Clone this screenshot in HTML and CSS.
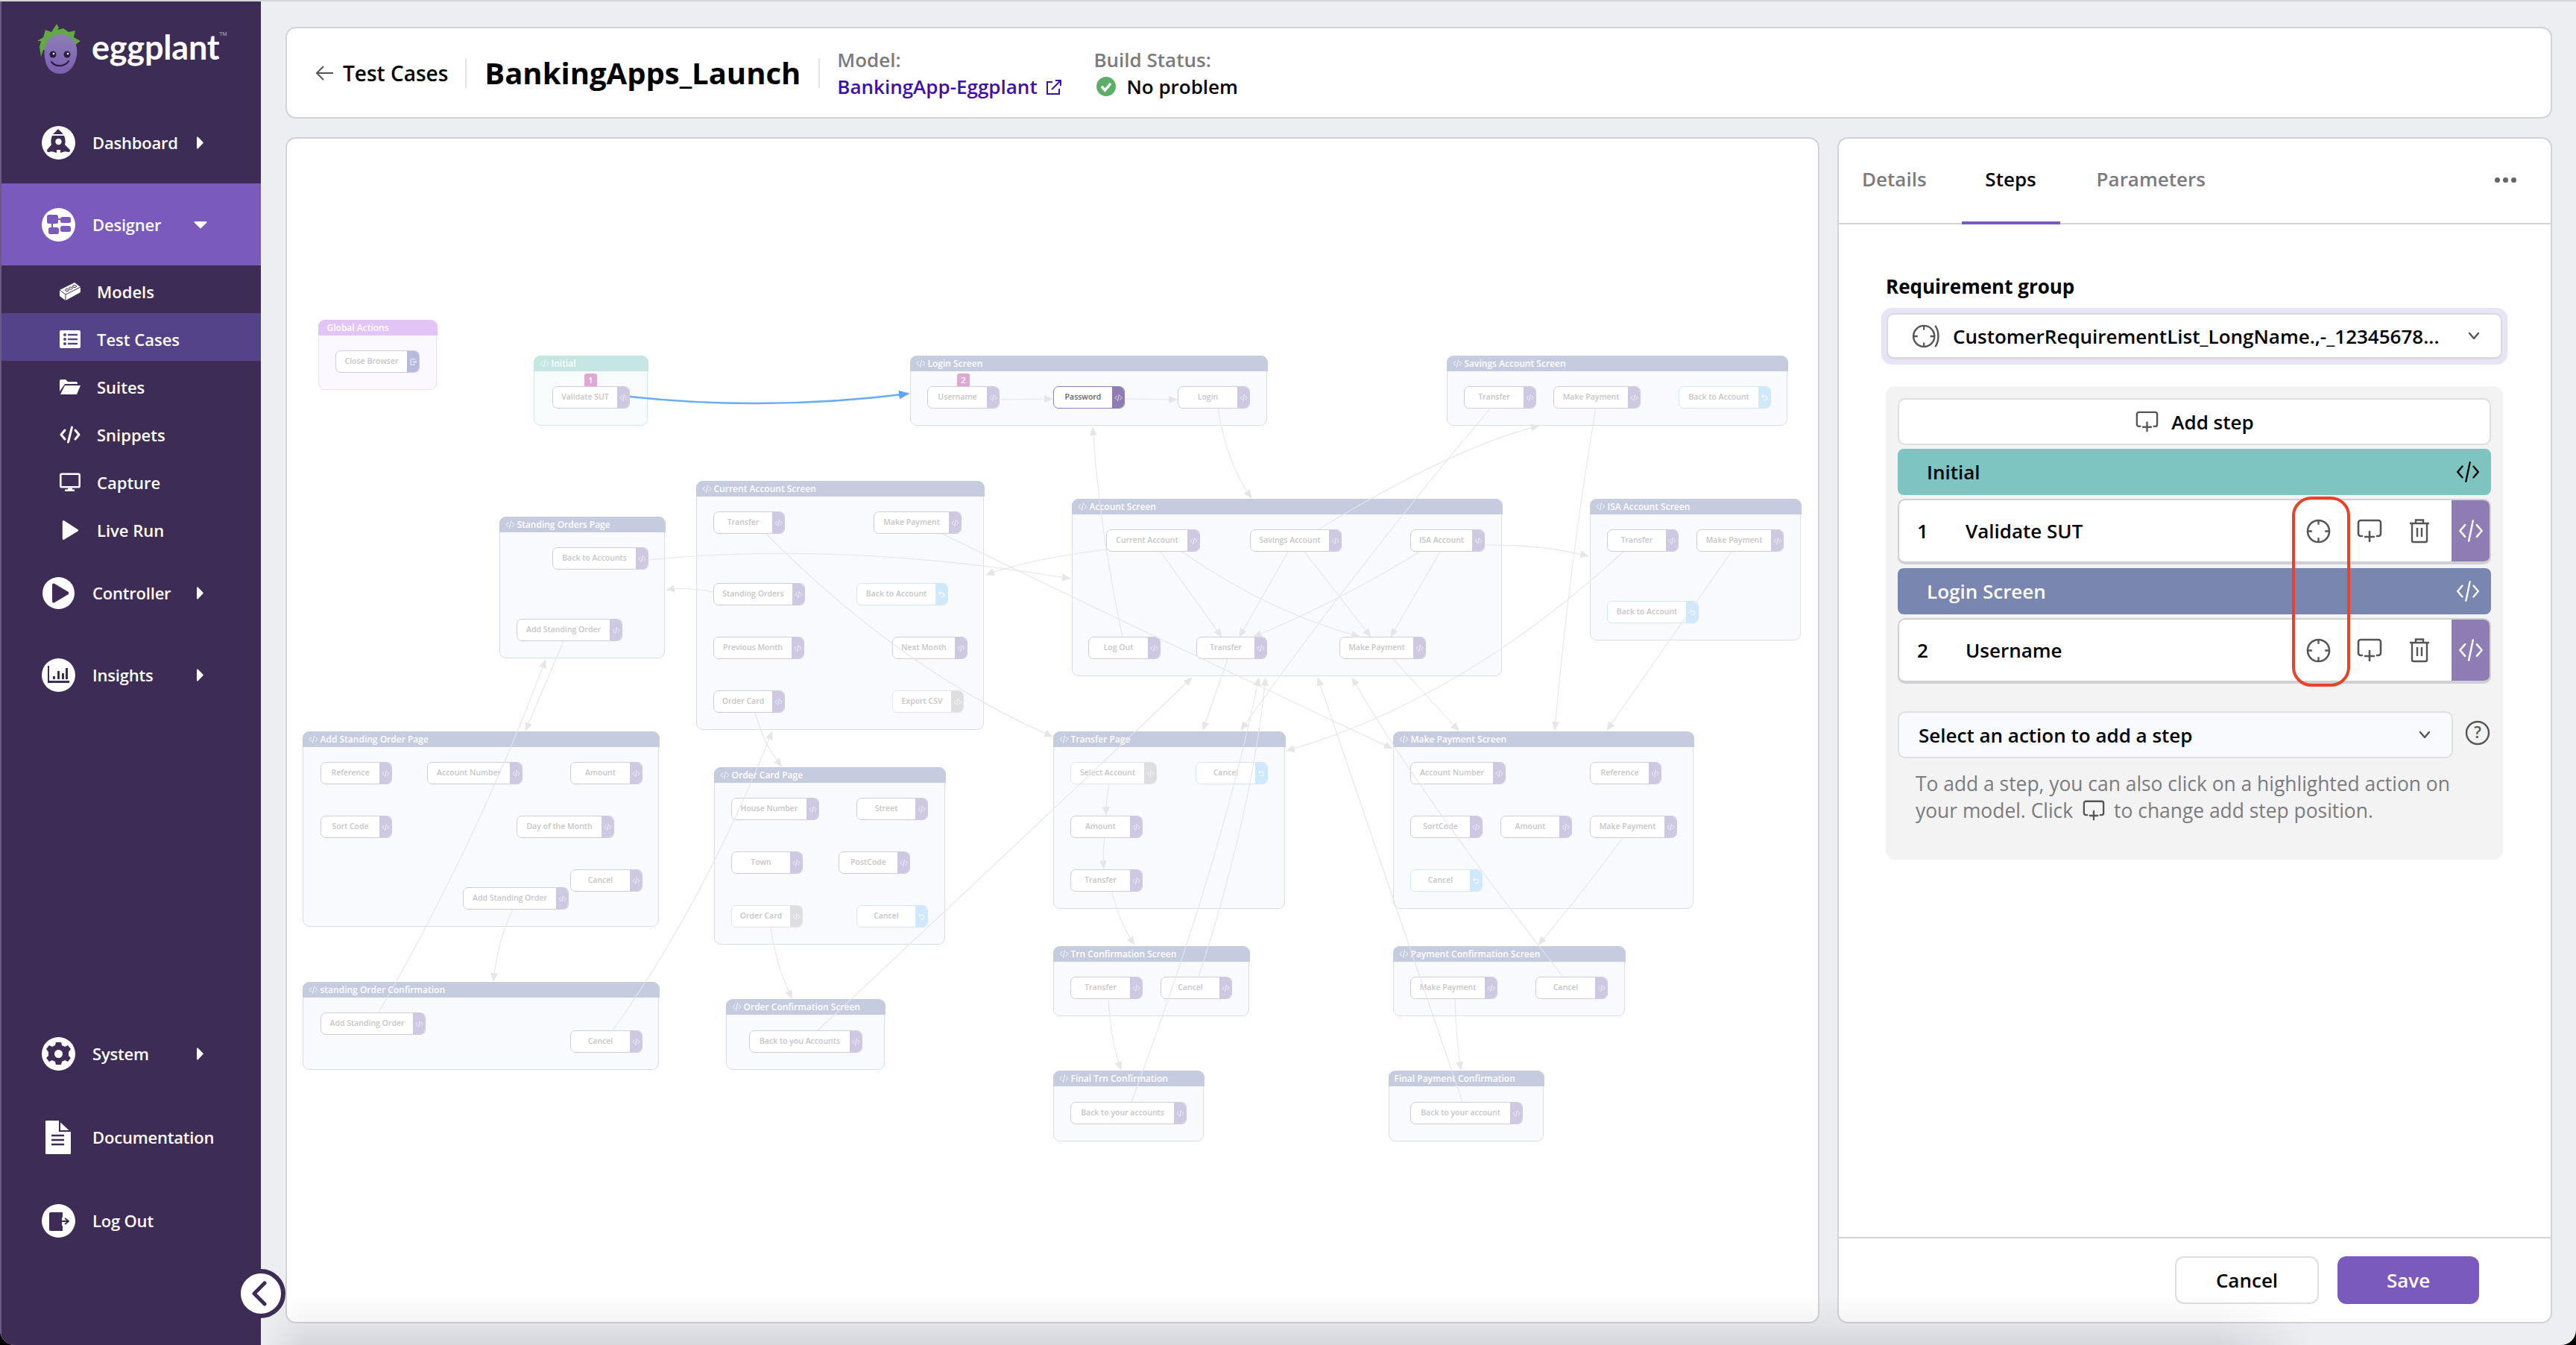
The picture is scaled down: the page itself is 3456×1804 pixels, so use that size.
FILE: index.html
```html
<!DOCTYPE html>
<html lang="en">
<head>
<meta charset="utf-8">
<title>Eggplant Designer</title>
<link rel="stylesheet" href="styles.css">
</head>
<body>
<svg class="sprite" aria-hidden="true">
  <symbol id="i-code" viewBox="0 0 32 32"><path d="M9 9 3 16l6 7M23 9l6 7-6 7M18.500 4 13.500 28" fill="none" stroke="currentColor" stroke-width="2.200" stroke-linecap="round" stroke-linejoin="round"/></symbol>
  <symbol id="i-exit" viewBox="0 0 32 32"><path d="M20 10V5H6v22h14v-5M14 16h14m-5-5 5 5-5 5" fill="none" stroke="currentColor" stroke-width="2.500"/></symbol>
  <symbol id="i-undo" viewBox="0 0 32 32"><path d="M11 4 5 10l6 6M5 10h13a7 7 0 0 1 0 15h-6" fill="none" stroke="currentColor" stroke-width="3"/></symbol>
  <symbol id="i-target" viewBox="0 0 34 34"><circle cx="17" cy="17" r="15" fill="none" stroke="currentColor" stroke-width="2.600"/><path d="M17 2v6M17 26v6M2 17h6M26 17h6" stroke="currentColor" stroke-width="2.400"/></symbol>
  <symbol id="i-add" viewBox="0 0 36 32"><path d="M8 23H6a3 3 0 0 1-3-3V5a3 3 0 0 1 3-3h24a3 3 0 0 1 3 3v15a3 3 0 0 1-3 3h-2M18 17v13M12 24h12" fill="none" stroke="currentColor" stroke-width="2.600" stroke-linecap="round"/></symbol>
  <symbol id="i-trash" viewBox="0 0 30 34"><path d="M2 7h26M10 7V2.500h10V7M5 7v23a2 2 0 0 0 2 2h16a2 2 0 0 0 2-2V7M12 13v12M18 13v12" fill="none" stroke="currentColor" stroke-width="2.400"/></symbol>
  <symbol id="i-chev" viewBox="0 0 16 12"><path d="m2 2 6 7 6-7" fill="none" stroke="currentColor" stroke-width="2.400" stroke-linecap="round" stroke-linejoin="round"/></symbol>
  <symbol id="i-tri-r" viewBox="0 0 10 17"><path d="M1 1.500v14a1 1 0 0 0 1.700.700L9.500 9a1 1 0 0 0 0-1.200L2.700.800A1 1 0 0 0 1 1.500Z" fill="currentColor"/></symbol>
</svg>

<div class="app">
  <aside class="sidebar">
    <div class="logo">
      <svg class="logo-mark" viewBox="0 0 62 68">
        <defs><linearGradient id="lg" x1="0" y1="0" x2="0" y2="1"><stop offset="0" stop-color="#8E7DB8"/><stop offset="1" stop-color="#7A5FB0"/></linearGradient></defs>
        <path d="M0 23 8 18 11 8l8 3 7-11 3 5-2 3 8-2 7 5 9-2-2 9 9 5-7 5 1 13-5-6H8l-3 9-2-13 2-8Z" fill="#63A844"/>
        <path d="M31 14c11 0 20 7 22 18 1 7 0 12-2 18-3 10-11 17-20 17-10 0-18-6-20-17-2-8-2-14 0-20 2-9 10-16 20-16Z" fill="url(#lg)"/>
        <circle cx="21" cy="41" r="4.500" fill="#2B1E45"/><circle cx="40" cy="41" r="4.500" fill="#2B1E45"/>
        <circle cx="22" cy="40" r="1.300" fill="#fff"/><circle cx="41" cy="40" r="1.300" fill="#fff"/>
        <path d="M19 51c5 7 18 7 23-1" fill="none" stroke="#2B1E45" stroke-width="2.200" stroke-linecap="round"/>
      </svg>
      <span class="logo-word">eggplant</span><span class="logo-tm">TM</span>
    </div>

    <nav class="nav">
      <a class="nav-item">
        <svg class="nav-icon" viewBox="0 0 45 45"><circle cx="22.500" cy="22.500" r="22.500" fill="#fff"/><path d="M22 4l7 7H15ZM14 13h16c2 4 2 9 1 12l6 6c2 2 1 4-2 4-4-2-7 0-10 1v-4h-5v4c-3-1-7-3-10-1-3 0-4-2-2-4l5-6c-1-3-1-8 1-12Z" fill="#3D2C55"/><circle cx="22.500" cy="21" r="4.200" fill="#fff"/></svg>
        <span class="nav-label">Dashboard</span>
        <svg class="nav-arrow"><use href="#i-tri-r"/></svg>
      </a>
      <a class="nav-item nav-item-active">
        <svg class="nav-icon" viewBox="0 0 45 45"><circle cx="22.500" cy="22.500" r="22.500" fill="#fff"/><g fill="#7A5ABD"><rect x="7" y="9" width="15" height="12" rx="2.500"/><rect x="25" y="12" width="14" height="8" rx="2.500"/><rect x="9" y="26" width="14" height="9" rx="2.500"/><rect x="25" y="24" width="14" height="8" rx="2.500"/><rect x="20" y="14" width="7" height="2"/><rect x="13" y="20" width="2" height="7"/></g></svg>
        <span class="nav-label">Designer</span>
        <svg class="nav-caret" viewBox="0 0 18 11"><path d="M1.500 1h15a1 1 0 0 1 .7 1.700L9.700 10a1 1 0 0 1-1.400 0L.8 2.700A1 1 0 0 1 1.500 1Z" fill="currentColor"/></svg>
      </a>
      <a class="nav-sub">
        <svg class="sub-icon" viewBox="0 0 28 24"><path d="M0 10 20 0l8 6v7L8 24 0 18Z" fill="#fff"/><path d="M0 10l8 6 20-10M8 16v8" fill="none" stroke="#3D2C55" stroke-width="1"/><g fill="none" stroke="#3D2C55" stroke-width="1"><ellipse cx="10" cy="10" rx="2.500" ry="1.500"/><ellipse cx="15" cy="7.500" rx="2.500" ry="1.500"/><ellipse cx="20" cy="5" rx="2.500" ry="1.500"/></g></svg>
        <span class="sub-label">Models</span>
      </a>
      <a class="nav-sub nav-sub-active">
        <svg class="sub-icon" viewBox="0 0 28 24"><rect width="28" height="24" rx="2" fill="#fff"/><g fill="#55438A"><circle cx="7" cy="6" r="2"/><circle cx="7" cy="12" r="2"/><circle cx="7" cy="18" r="2"/><rect x="11" y="4.800" width="13" height="2.400"/><rect x="11" y="10.800" width="13" height="2.400"/><rect x="11" y="16.800" width="13" height="2.400"/></g></svg>
        <span class="sub-label">Test Cases</span>
      </a>
      <a class="nav-sub">
        <svg class="sub-icon" viewBox="0 0 28 20"><path d="M0 2a2 2 0 0 1 2-2h6l3 3h11a2 2 0 0 1 2 2v1H7L0 16Z" fill="#fff"/><path d="M7 8h21l-5 12H1Z" fill="#fff"/></svg>
        <span class="sub-label">Suites</span>
      </a>
      <a class="nav-sub">
        <svg class="sub-icon" viewBox="0 0 28 22"><path d="M7 5 2 11l5 6M21 5l5 6-5 6M16.500 1l-5 20" fill="none" stroke="#fff" stroke-width="3" stroke-linecap="round" stroke-linejoin="round"/></svg>
        <span class="sub-label">Snippets</span>
      </a>
      <a class="nav-sub">
        <svg class="sub-icon" viewBox="0 0 28 25"><rect x="1.300" y="1.300" width="25.400" height="17.400" rx="1.500" fill="none" stroke="#fff" stroke-width="2.600"/><path d="M11 20h6v2h3v2.500H7V22h4Z" fill="#fff"/></svg>
        <span class="sub-label">Capture</span>
      </a>
      <a class="nav-sub">
        <svg class="sub-icon" viewBox="0 0 26 28"><path d="M2 1.500v25a1.500 1.500 0 0 0 2.300 1.200l20-12a1.500 1.500 0 0 0 0-2.600L4.300.300A1.500 1.500 0 0 0 2 1.500Z" fill="#fff"/></svg>
        <span class="sub-label">Live Run</span>
      </a>
      <a class="nav-item">
        <svg class="nav-icon" viewBox="0 0 45 45"><circle cx="22.500" cy="22.500" r="21.500" fill="#fff"/><path d="M14 11.500a2 2 0 0 1 3-1.700l18 10.600a2.400 2.400 0 0 1 0 4.200L17 35.200a2 2 0 0 1-3-1.700Z" fill="#3D2C55"/></svg>
        <span class="nav-label">Controller</span>
        <svg class="nav-arrow"><use href="#i-tri-r"/></svg>
      </a>
      <a class="nav-item">
        <svg class="nav-icon" viewBox="0 0 45 45"><circle cx="22.500" cy="22.500" r="22.500" fill="#fff"/><path d="M8 10h2v20h27v3H8Z" fill="#3D2C55"/><g fill="#3D2C55"><rect x="15" y="24" width="3" height="4"/><rect x="21" y="17" width="3" height="11"/><rect x="27" y="20" width="3" height="8"/><rect x="32" y="13" width="3" height="15"/></g></svg>
        <span class="nav-label">Insights</span>
        <svg class="nav-arrow"><use href="#i-tri-r"/></svg>
      </a>
    </nav>

    <nav class="nav-bottom">
      <a class="nav-item nav-item-tall">
        <svg class="nav-icon" viewBox="0 0 45 45"><circle cx="22.500" cy="22.500" r="22.500" fill="#fff"/><path d="M19 7h7l1 4 4 2 4-2 4 5-3 4v5l3 3-4 5-4-2-4 2-1 4h-7l-1-4-4-2-4 2-4-5 3-3v-5l-3-4 4-5 4 2 4-2Z" fill="#3D2C55"/><circle cx="22.500" cy="22.500" r="5.500" fill="#fff"/></svg>
        <span class="nav-label">System</span>
        <svg class="nav-arrow"><use href="#i-tri-r"/></svg>
      </a>
      <a class="nav-item nav-item-tall">
        <svg class="nav-icon" viewBox="0 0 45 45"><path d="M5 1a1 1 0 0 1 1-1h20v12h13v32a1 1 0 0 1-1 1H6a1 1 0 0 1-1-1Z" fill="#fff"/><path d="M24 0 39 14H24Z" fill="#fff" stroke="#3D2C55" stroke-width="2"/><path d="M13 20h17M13 26h17M13 32h17" stroke="#3D2C55" stroke-width="2.500"/></svg>
        <span class="nav-label">Documentation</span>
      </a>
      <a class="nav-item nav-item-tall">
        <svg class="nav-icon" viewBox="0 0 45 45"><circle cx="22.500" cy="22.500" r="22.500" fill="#fff"/><path d="M12 11h15v25H12a2 2 0 0 1-2-2V13a2 2 0 0 1 2-2Z" fill="#3D2C55"/><path d="M27 11v7M27 29v7M24 23h11m-4-4 5 4-5 4" fill="none" stroke="#3D2C55" stroke-width="2"/></svg>
        <span class="nav-label">Log Out</span>
      </a>
    </nav>

    <button class="collapse" type="button" aria-label="Collapse">
      <svg viewBox="0 0 24 34"><path d="M19 3 5 17l14 14" fill="none" stroke="#3D2C55" stroke-width="5" stroke-linecap="round" stroke-linejoin="round"/></svg>
    </button>
  </aside>

  <main class="main">
    <header class="topbar">
      <a class="back">
        <svg class="back-icon" viewBox="0 0 24 24"><path d="M11 3 2 12l9 9M2 12h22" fill="none" stroke="#555" stroke-width="2"/></svg>
        <span>Test Cases</span>
      </a>
      <span class="v-divider"></span>
      <h1 class="title">BankingApps_Launch</h1>
      <span class="v-divider"></span>
      <div class="meta meta-model">
        <span class="meta-key">Model:</span>
        <a class="meta-link">BankingApp-Eggplant
          <svg class="ext-icon" viewBox="0 0 22 22"><path d="M9 4H2v16h16v-7M8 14 20 2M13 2h7v7" fill="none" stroke="currentColor" stroke-width="2"/></svg>
        </a>
      </div>
      <div class="meta">
        <span class="meta-key">Build Status:</span>
        <span class="meta-status">
          <svg class="ok-icon" viewBox="0 0 26 26"><circle cx="13" cy="13" r="13" fill="#5DAE67"/><path d="m7 13 4.500 5L19 9" fill="none" stroke="#fff" stroke-width="3.500"/></svg>
          No problem
        </span>
      </div>
    </header>

    <div class="workspace">
      <section class="canvas" id="canvas"></section>

      <section class="panel">
        <div class="tabs">
          <a class="tab">Details</a>
          <a class="tab tab-active">Steps</a>
          <a class="tab">Parameters</a>
          <span class="tabs-more"><i></i><i></i><i></i></span>
        </div>

        <div class="panel-body">
          <label class="field-label">Requirement group</label>
          <div class="ring">
            <div class="req-select">
              <svg class="req-icon" viewBox="0 0 40 34"><use href="#i-target" width="34" height="34"/><path d="M33 2c6 8 6 22 0 30" fill="none" stroke="currentColor" stroke-width="2.600"/></svg>
              <span class="req-text">CustomerRequirementList_LongName.,-_12345678...</span>
              <svg class="chev"><use href="#i-chev"/></svg>
            </div>
          </div>

          <div class="steps">
            <button class="add-step" type="button"><svg class="add-icon"><use href="#i-add"/></svg>Add step</button>

            <div class="step-head step-head-teal"><span>Initial</span><svg class="head-code"><use href="#i-code"/></svg></div>
            <div class="step">
              <span class="step-num">1</span><span class="step-name">Validate SUT</span>
              <svg class="act act-target"><use href="#i-target"/></svg>
              <svg class="act act-add"><use href="#i-add"/></svg>
              <svg class="act act-trash"><use href="#i-trash"/></svg>
              <span class="step-code"><svg><use href="#i-code"/></svg></span>
            </div>

            <div class="step-head step-head-blue"><span>Login Screen</span><svg class="head-code"><use href="#i-code"/></svg></div>
            <div class="step">
              <span class="step-num">2</span><span class="step-name">Username</span>
              <svg class="act act-target"><use href="#i-target"/></svg>
              <svg class="act act-add"><use href="#i-add"/></svg>
              <svg class="act act-trash"><use href="#i-trash"/></svg>
              <span class="step-code"><svg><use href="#i-code"/></svg></span>
            </div>

            <div class="action-row">
              <div class="action-select"><span>Select an action to add a step</span><svg class="chev"><use href="#i-chev"/></svg></div>
              <svg class="help" viewBox="0 0 34 34"><circle cx="17" cy="17" r="15" fill="none" stroke="currentColor" stroke-width="2.400"/><text x="17" y="24" text-anchor="middle" class="help-q">?</text></svg>
            </div>

            <div class="hint">
              <span class="hint-line">To add a step, you can also click on a highlighted action on</span>
              <div class="hint-line"><span>your model. Click</span><svg class="hint-icon"><use href="#i-add"/></svg><span>to change add step position.</span></div>
            </div>

            <span class="red-mark"></span>
          </div>
        </div>

        <footer class="panel-foot">
          <button class="btn btn-ghost" type="button">Cancel</button>
          <button class="btn btn-primary" type="button">Save</button>
        </footer>
      </section>
    </div>
  </main>
  <div class="bottom-shade"></div>
</div>
<script src="script.js"></script>
</body>
</html>
```

FILE: styles.css
```css
* { box-sizing: border-box; }
html, body { margin: 0; height: 100%; background: #000; }
body { font-family: "Open Sans", "Liberation Sans", sans-serif; color: #000; overflow: hidden; }
.sprite { position: absolute; width: 0; height: 0; }
a { color: inherit; text-decoration: none; }

.app { position: relative; display: flex; width: 3456px; height: 1804px; background: #ECEEF2; border-top: 2px solid #D4D4D6; border-radius: 0 0 20px 20px; overflow: hidden; }

/* Sidebar */
.sidebar { position: relative; display: flex; flex-direction: column; flex: 0 0 350px; background: #3D2C55; color: #fff; border-left: 2px solid #6A5A80; z-index: 2; }
.logo { display: flex; align-items: flex-start; height: 134px; padding: 30px 0 0 48px; }
.logo-mark { width: 62px; height: 68px; }
.logo-word { margin: 3px 0 0 11px; font-family: "Lato", sans-serif; font-weight: 700; font-size: 45px; line-height: 56px; letter-spacing: -.2px; }
.logo-tm { margin-top: 9px; font-family: "Liberation Sans", sans-serif; font-size: 7px; line-height: 10px; color: #bbb; }

.nav-item { display: flex; align-items: center; height: 110px; padding-left: 54px; }
.nav-item-active { background: #7A5ABD; }
.nav-item-tall { height: 112px; }
.nav-icon { flex: 0 0 45px; width: 45px; height: 45px; }
.nav-label { margin-left: 23px; font-size: 22px; font-weight: 600; letter-spacing: -.2px; }
.nav-arrow { position: absolute; left: 261px; width: 10px; height: 17px; color: #fff; }
.nav-caret { position: absolute; left: 258px; width: 18px; height: 11px; color: #fff; }
.nav-sub { display: flex; align-items: center; height: 64px; padding: 6px 0 0 78px; }
.nav-sub-active { background: #55438A; }
.sub-icon { flex: 0 0 28px; width: 28px; height: 26px; }
.sub-label { margin-left: 22px; font-size: 22px; font-weight: 600; }
.nav-bottom { margin-top: auto; margin-bottom: 111px; }

.collapse { position: absolute; top: 1700px; right: -33px; display: flex; align-items: center; justify-content: center; width: 66px; height: 66px; padding: 0 4px 0 0; background: #fff; border: 6px solid #3D2C55; border-radius: 50%; }
.collapse svg { width: 24px; height: 34px; }

/* Main */
.main { display: flex; flex-direction: column; flex: 1; min-width: 0; padding: 34px 32px 29px 33px; gap: 25px; }
.topbar { display: flex; align-items: center; flex: 0 0 123px; padding-left: 38px; background: #fff; border: 2px solid #D2D3D8; border-radius: 14px; }
.back { display: flex; align-items: center; gap: 13px; font-size: 28px; font-weight: 600; }
.back-icon { width: 24px; height: 24px; }
.v-divider { width: 2px; height: 40px; background: #E4E4E6; }
.back + .v-divider { margin-left: 23px; }
.title { margin: 0 24px; font-size: 40px; line-height: 54px; font-weight: 700; }
.meta { display: flex; flex-direction: column; gap: 6px; margin-left: 23px; font-size: 26px; line-height: 30px; font-weight: 600; }
.meta-model { margin-right: 19px; }
.meta-key { color: #7B7B7F; }
.meta-link { color: #3D11A8; white-space: nowrap; }
.ext-icon { width: 22px; height: 22px; margin-left: 5px; vertical-align: -2px; }
.meta-status { display: flex; align-items: center; gap: 14px; padding-left: 4px; color: #000; }
.ok-icon { width: 26px; height: 26px; }

.workspace { display: flex; flex: 1; min-height: 0; gap: 24px; }
.canvas { position: relative; flex: 0 0 2058px; background: #fff; border: 2px solid #D2D3D8; border-radius: 14px; overflow: hidden; }

/* Diagram */
.group { position: absolute; background: #F9FAFE; border: 1.500px solid #DADEEB; border-radius: 9px; overflow: visible; }
.group-head { display: flex; align-items: center; gap: 3px; height: 21px; margin: -1.500px -1.500px 0; padding-left: 8px; background: #C6CCDF; border-radius: 9px 9px 0 0; color: #fff; font-size: 12px; font-weight: 600; white-space: nowrap; }
.group-head svg { width: 13px; height: 13px; }
.group-teal { background: #F8FCFC; border-color: #CFEBE9; }
.group-teal .group-head { background: #C5E6E3; }
.group-global { background: #FBF8FF; border-color: #EFDDFA; }
.group-global .group-head { background: #E2C5F6; padding-left: 12px; }
.node { position: absolute; display: flex; height: 30px; background: #fff; border: 1.500px solid #CFCBE3; border-radius: 7px; overflow: hidden; color: #C6C6C8; font-size: 10.500px; font-weight: 600; }
.node-label { flex: 1; min-width: 0; text-align: center; line-height: 27px; white-space: nowrap; }
.node-side { display: flex; align-items: center; justify-content: center; flex: 0 0 16px; background: #CEC8E2; color: #fff; }
.node-side svg { width: 11px; height: 11px; }
.node-blue { border-color: #CFE8FB; }
.node-blue .node-side { background: #CFE8FB; }
.node-grey { border-color: #E4E4E6; }
.node-grey .node-side { background: #DEDEE0; }
.node-exit .node-side { background: #B6BBDE; }
.node-active { border-color: #8E7DB5; color: #666; }
.node-active .node-side { background: #8E7DB5; }
.badge { position: absolute; width: 17px; height: 17px; border-radius: 3px 3px 0 0; background: #DDA9D3; color: #fff; font-size: 11px; font-weight: 600; line-height: 17px; text-align: center; }
.edges { position: absolute; inset: 0; width: 2054px; height: 1587px; pointer-events: none; }
.edge { fill: none; stroke: #E6E6E8; stroke-width: 1.100; }
.edge-blue { stroke: #6AACF5; stroke-width: 2.500; }
.head-light { fill: #E6E6E8; }
.head-blue { fill: #5FA4F2; }

/* Right panel */
.panel { display: flex; flex-direction: column; flex: 1; min-width: 0; background: #fff; border: 2px solid #D2D3D8; border-radius: 14px; }
.tabs { position: relative; display: flex; align-items: stretch; gap: 47px; flex: 0 0 115px; padding-left: 31px; border-bottom: 2px solid #D2D3D8; }
.tab { display: flex; align-items: center; justify-content: center; padding-bottom: 6px; color: #7B7B7F; font-size: 26px; font-weight: 600; }
.tab-active { position: relative; width: 132px; margin-right: 2px; color: #000; }
.tab-active::after { content: ""; position: absolute; left: 0; right: 0; bottom: -2px; height: 4px; background: #7A5ABD; }
.tabs-more { position: absolute; top: 52px; right: 46px; display: flex; gap: 4px; }
.tabs-more i { width: 7px; height: 7px; border-radius: 50%; background: #666; }

.panel-body { position: relative; flex: 1; padding: 68px 64px 0 63px; min-height: 0; }
.field-label { display: block; font-size: 26px; line-height: 30px; font-weight: 700; }
.ring { margin: 14px -6px 0; padding: 7px; background: #E9E3F7; border-radius: 14px; }
.req-select { display: flex; align-items: center; height: 62px; padding: 0 28px 0 31px; background: #fff; border: 2px solid #DADADC; border-bottom-width: 3px; border-radius: 10px; font-size: 26px; font-weight: 600; }
.req-icon { width: 40px; height: 32px; color: #555; }
.req-text { margin-left: 16px; flex: 1; white-space: nowrap; }
.chev { width: 16px; height: 12px; color: #555; }

.steps { position: relative; margin-top: 29px; height: 635px; padding: 16px; background: #F3F3F4; border-radius: 12px; }
.add-step { display: flex; align-items: center; justify-content: center; gap: 16px; width: 100%; height: 63px; background: #fff; border: 2px solid #DFDFE1; border-radius: 10px; font: 600 26px "Open Sans", sans-serif; color: #000; }
.add-icon { width: 33px; height: 29px; color: #555; }
.step-head { display: flex; align-items: center; justify-content: space-between; height: 62px; padding: 0 14px 0 39px; border-radius: 8px; font-size: 26px; font-weight: 600; }
.step-head-teal { margin-top: 5px; background: #7EC4C1; color: #000; }
.step-head-blue { margin-top: 5px; background: #7886B0; color: #fff; }
.head-code { width: 34px; height: 34px; color: currentColor; }
.step { position: relative; display: flex; align-items: center; height: 88px; margin-top: 5px; background: #fff; border: 2px solid #CFCFD6; border-bottom-width: 4px; border-radius: 10px; overflow: hidden; font-size: 26px; font-weight: 600; }
.step-num { position: absolute; left: 24px; }
.step-name { position: absolute; left: 89px; }
.act { position: absolute; color: #555; }
.act-target { left: 546px; width: 33px; height: 33px; }
.act-add { left: 612px; width: 38px; height: 32px; }
.act-trash { left: 683px; width: 30px; height: 34px; }
.step-code { position: absolute; right: 0; top: 0; bottom: 0; width: 51px; display: flex; align-items: center; justify-content: center; background: #8E7DB5; color: #fff; }
.step-code svg { width: 36px; height: 36px; }

.action-row { display: flex; align-items: center; margin-top: 37px; }
.action-select { display: flex; align-items: center; justify-content: space-between; flex: 0 0 745px; height: 63px; padding: 0 28px 0 26px; background: #F9FAFE; border: 2px solid #E0E0E4; border-radius: 10px; font-size: 26px; font-weight: 600; }
.help { width: 34px; height: 34px; margin: -6px 0 0 16px; color: #555; }
.help-q { font: 600 21px "Open Sans", sans-serif; fill: currentColor; }
.hint { margin: 16px 0 0 24px; color: #7B7B7F; font-size: 26.400px; line-height: 36px; font-weight: 400; white-space: nowrap; }
.hint-line { display: flex; align-items: center; height: 36px; }
.hint-icon { width: 34px; height: 28px; margin: 0 10px 0 11px; color: #555; }
.red-mark { position: absolute; left: 545px; top: 148px; width: 78px; height: 255px; border: 4px solid #E8432A; border-radius: 26px; }

.panel-foot { display: flex; justify-content: flex-end; gap: 25px; flex: 0 0 114px; padding: 24px 96px 0 0; border-top: 2px solid #D2D3D8; }
.btn { height: 64px; border-radius: 12px; font: 600 26px "Open Sans", sans-serif; }
.btn-ghost { width: 193px; background: #fff; border: 2px solid #DFDFE1; color: #000; }
.btn-primary { width: 190px; background: #7A5ABD; border: 0; color: #fff; }

.bottom-shade { position: absolute; left: 350px; right: 356px; bottom: 0; height: 70px; background: linear-gradient(to bottom, rgba(50,50,60,0), rgba(50,50,60,.05) 58%, rgba(50,50,60,.12)); -webkit-mask-image: linear-gradient(to right, transparent, #000 60px, #000 95.500%, transparent); mask-image: linear-gradient(to right, transparent, #000 60px, #000 95.500%, transparent); pointer-events: none; z-index: 1; }
```

FILE: script.js
```js
// Diagram data: coordinates are page coordinates of the model canvas.
var ORIGIN = [385, 186];
var GROUPS = [
  { t: 'Global Actions', k: 'global', nocode: 1, b: [427, 586, 429, 523], n: [['Close Browser', 450, 563, 470, 'exit']] },
  { t: 'Initial', k: 'teal', b: [716, 869, 477, 571], n: [['Validate SUT', 741, 845, 518]], badge: ['1', 784, 501] },
  { t: 'Login Screen', b: [1221, 1700, 477, 571], badge: ['2', 1284, 501], n: [['Username', 1244, 1341, 518], ['Password', 1413, 1509, 518, 'active'], ['Login', 1580, 1677, 518]] },
  { t: 'Savings Account Screen', b: [1941, 2398, 477, 571], n: [['Transfer', 1964, 2061, 518], ['Make Payment', 2084, 2201, 518], ['Back to Account', 2252, 2376, 518, 'blue']] },
  { t: 'Current Account Screen', b: [934, 1320, 645, 979], n: [['Transfer', 957, 1053, 686], ['Make Payment', 1172, 1290, 686], ['Standing Orders', 957, 1080, 782], ['Back to Account', 1149, 1272, 782, 'blue'], ['Previous Month', 957, 1079, 854], ['Next Month', 1197, 1298, 854], ['Order Card', 957, 1053, 926], ['Export CSV', 1197, 1293, 926, 'grey']] },
  { t: 'Standing Orders Page', b: [670, 892, 693, 883], n: [['Back to Accounts', 741, 870, 734], ['Add Standing Order', 693, 835, 830]] },
  { t: 'Account Screen', b: [1438, 2015, 669, 907], n: [['Current Account', 1484, 1610, 710], ['Savings Account', 1677, 1800, 710], ['ISA Account', 1892, 1992, 710], ['Log Out', 1460, 1557, 854], ['Transfer', 1605, 1700, 854], ['Make Payment', 1797, 1913, 854]] },
  { t: 'ISA Account Screen', b: [2133, 2416, 669, 859], n: [['Transfer', 2156, 2252, 710], ['Make Payment', 2276, 2393, 710], ['Back to Account', 2156, 2279, 806, 'blue']] },
  { t: 'Add Standing Order Page', b: [406, 884, 981, 1243], n: [['Reference', 430, 526, 1022], ['Account Number', 573, 701, 1022], ['Amount', 765, 862, 1022], ['Sort Code', 430, 526, 1094], ['Day of the Month', 693, 824, 1094], ['Cancel', 765, 862, 1166], ['Add Standing Order', 621, 763, 1190]] },
  { t: 'Order Card Page', b: [958, 1268, 1029, 1267], n: [['House Number', 981, 1099, 1070], ['Street', 1149, 1245, 1070], ['Town', 981, 1077, 1142], ['PostCode', 1125, 1221, 1142], ['Order Card', 981, 1077, 1214, 'grey'], ['Cancel', 1149, 1245, 1214, 'blue']] },
  { t: 'standing Order Confirmation', b: [406, 884, 1317, 1435], n: [['Add Standing Order', 430, 571, 1358], ['Cancel', 765, 862, 1382]] },
  { t: 'Order Confirmation Screen', b: [974, 1187, 1340, 1435], n: [['Back to you Accounts', 1005, 1157, 1382]] },
  { t: 'Transfer Page', b: [1413, 1724, 981, 1219], n: [['Select Account', 1436, 1552, 1022, 'grey'], ['Cancel', 1604, 1701, 1022, 'blue'], ['Amount', 1436, 1533, 1094], ['Transfer', 1436, 1533, 1166]] },
  { t: 'Make Payment Screen', b: [1869, 2272, 981, 1219], n: [['Account Number', 1892, 2020, 1022], ['Reference', 2133, 2229, 1022], ['SortCode', 1892, 1989, 1094], ['Amount', 2013, 2109, 1094], ['Make Payment', 2133, 2250, 1094], ['Cancel', 1892, 1989, 1166, 'blue']] },
  { t: 'Trn Confirmation Screen', b: [1413, 1676, 1269, 1363], n: [['Transfer', 1436, 1533, 1310], ['Cancel', 1557, 1653, 1310]] },
  { t: 'Payment Confirmation Screen', b: [1869, 2180, 1269, 1363], n: [['Make Payment', 1892, 2009, 1310], ['Cancel', 2060, 2157, 1310]] },
  { t: 'Final Trn Confirmation', b: [1413, 1615, 1436, 1531], n: [['Back to your accounts', 1436, 1592, 1478]] },
  { t: 'Final Payment Confirmation', nocode: 1, b: [1863, 2071, 1436, 1531], n: [['Back to your account', 1892, 2043, 1478]] }
];
// x1, y1, x2, y2, [control x, control y]
var EDGES = [
  [1341, 536, 1412, 535], [1509, 535, 1579, 536], [1634, 547, 1679, 668, 1645, 620],
  [1506, 854, 1466, 573, 1475, 710], [1769, 710, 2065, 571, 1950, 600],
  [2000, 547, 1665, 979, 1820, 760], [2141, 547, 2086, 979, 2105, 760],
  [1484, 737, 1323, 771, 1380, 750], [870, 751, 1436, 776, 1130, 725],
  [1557, 740, 1639, 854], [1586, 740, 1824, 854, 1700, 820], [1728, 740, 1663, 854], [1750, 740, 1839, 854],
  [1905, 740, 1682, 854, 1790, 810], [1932, 740, 1866, 854], [1992, 731, 2131, 746, 2070, 730],
  [2178, 740, 1726, 1007, 1960, 940], [2323, 740, 2156, 979],
  [1028, 716, 1412, 988, 1210, 900], [1264, 716, 1868, 1004, 1560, 860],
  [1869, 884, 1957, 980], [1647, 884, 1614, 979],
  [1097, 1382, 1599, 909, 1420, 1080], [1608, 1310, 1698, 909, 1680, 1090], [1518, 1478, 1689, 909, 1640, 1150],
  [1962, 1478, 1768, 909, 1850, 1150], [2097, 1310, 1814, 909, 1900, 1060],
  [957, 794, 894, 791, 920, 787], [756, 860, 705, 980], [508, 1358, 732, 885, 640, 1130],
  [688, 1220, 662, 1316, 668, 1260], [1013, 956, 1049, 1028, 1025, 1000], [822, 1382, 1036, 981, 945, 1210],
  [1034, 1244, 1063, 1339, 1042, 1300], [1488, 1052, 1484, 1093, 1484, 1072], [1482, 1124, 1481, 1165, 1479, 1145],
  [1492, 1196, 1522, 1267, 1500, 1235], [1487, 1340, 1504, 1435, 1490, 1395], [2177, 1124, 2064, 1267, 2105, 1220],
  [1952, 1340, 1960, 1435, 1953, 1390]
];
var BLUE_EDGE = [845, 532, 1219, 528, 1030, 552];

var SVGNS = 'http://www.w3.org/2000/svg';
function icon(name) {
  return '<svg><use href="#i-' + name + '"/></svg>';
}
function place(el, x, y, w, h) {
  el.style.left = x + 'px';
  el.style.top = y + 'px';
  if (w) el.style.width = w + 'px';
  if (h) el.style.height = h + 'px';
}
function renderGroup(canvas, g) {
  var box = g.b;
  var el = document.createElement('div');
  el.className = 'group' + (g.k ? ' group-' + g.k : '');
  place(el, box[0] - ORIGIN[0], box[2] - ORIGIN[1], box[1] - box[0], box[3] - box[2]);
  var head = document.createElement('div');
  head.className = 'group-head';
  head.innerHTML = (g.nocode ? '' : icon('code')) + '<span></span>';
  head.querySelector('span').textContent = g.t;
  el.appendChild(head);
  canvas.appendChild(el);
  if (g.badge) {
    var b = document.createElement('span');
    b.className = 'badge';
    b.textContent = g.badge[0];
    place(b, g.badge[1] - ORIGIN[0], g.badge[2] - ORIGIN[1]);
    canvas.appendChild(b);
  }
  g.n.forEach(function (n) {
    var node = document.createElement('div');
    node.className = 'node' + (n[4] ? ' node-' + n[4] : '');
    place(node, n[1] - ORIGIN[0], n[3] - ORIGIN[1], n[2] - n[1]);
    var kind = n[4] === 'blue' ? 'undo' : n[4] === 'exit' ? 'exit' : 'code';
    node.innerHTML = '<span class="node-label"></span><span class="node-side">' + icon(kind) + '</span>';
    node.querySelector('.node-label').textContent = n[0];
    canvas.appendChild(node);
  });
}
function marker(defs, id, cls, w, h) {
  var m = document.createElementNS(SVGNS, 'marker');
  m.setAttribute('id', id);
  m.setAttribute('viewBox', '0 0 14 12');
  m.setAttribute('markerWidth', w);
  m.setAttribute('markerHeight', h);
  m.setAttribute('markerUnits', 'userSpaceOnUse');
  m.setAttribute('refX', '13');
  m.setAttribute('refY', '6');
  m.setAttribute('orient', 'auto');
  var p = document.createElementNS(SVGNS, 'path');
  p.setAttribute('d', 'M0 0 14 6 0 12Z');
  p.setAttribute('class', cls);
  m.appendChild(p);
  defs.appendChild(m);
}
function edgePath(svg, e, cls, mark) {
  var p = document.createElementNS(SVGNS, 'path');
  var cx = e.length > 4 ? e[4] : (e[0] + e[2]) / 2;
  var cy = e.length > 4 ? e[5] : (e[1] + e[3]) / 2;
  p.setAttribute('d', 'M' + e[0] + ' ' + e[1] + ' Q' + cx + ' ' + cy + ' ' + e[2] + ' ' + e[3]);
  p.setAttribute('class', cls);
  p.setAttribute('marker-end', 'url(#' + mark + ')');
  svg.appendChild(p);
}
(function () {
  var canvas = document.getElementById('canvas');
  GROUPS.forEach(function (g) { renderGroup(canvas, g); });
  var svg = document.createElementNS(SVGNS, 'svg');
  svg.setAttribute('class', 'edges');
  svg.setAttribute('viewBox', ORIGIN[0] + ' ' + ORIGIN[1] + ' 2054 1587');
  var defs = document.createElementNS(SVGNS, 'defs');
  marker(defs, 'm-light', 'head-light', 12, 10);
  marker(defs, 'm-blue', 'head-blue', 14, 12);
  svg.appendChild(defs);
  EDGES.forEach(function (e) { edgePath(svg, e, 'edge', 'm-light'); });
  edgePath(svg, BLUE_EDGE, 'edge edge-blue', 'm-blue');
  canvas.appendChild(svg);
})();
```
